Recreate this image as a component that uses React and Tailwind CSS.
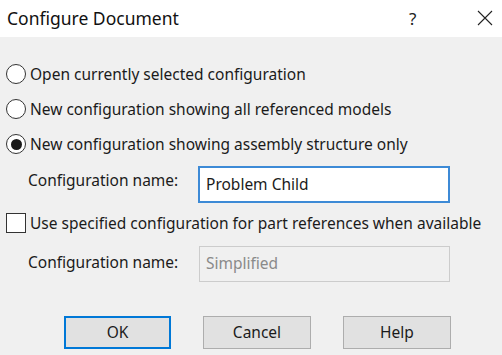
import React, { useState } from 'react';

const Radio = ({ checked, label, onSelect }) => (
  <label className="flex items-center h-[20px] cursor-default" onClick={onSelect}>
    <span className="w-[20px] h-[20px] rounded-full border-[1.5px] border-[#333333] bg-white flex items-center justify-center shrink-0">
      {checked && <span className="w-[11px] h-[11px] rounded-full bg-[#1a1a1a]" />}
    </span>
    <span className="ml-[4px] pt-[2px]">{label}</span>
  </label>
);

const Button = ({ children, primary }) => (
  <button
    className={
      primary
        ? 'w-[107px] h-[33px] bg-[#e1e1e1] border-2 border-[#0078d7] text-[15.5px]'
        : 'w-[108px] h-[33px] bg-[#e1e1e1] border border-[#adadad] text-[15.5px]'
    }
  >
    {children}
  </button>
);

export default function App() {
  const [mode, setMode] = useState(2);
  const [name, setName] = useState('Problem Child');
  const [useSpecified, setUseSpecified] = useState(false);

  const options = [
    'Open currently selected configuration',
    'New configuration showing all referenced models',
    'New configuration showing assembly structure only'
  ];

  return (
    <div className="w-[502px] h-[355px] bg-[#f0f0f0] text-[#1b1b1b] text-[15.5px] font-['Segoe_UI','Noto_Sans',sans-serif] overflow-hidden">
      {/* title bar */}
      <div className="h-[37px] bg-white flex items-center pl-[7px]">
        <span className="text-[17.5px] text-[#111]">Configure Document</span>
        <span className="ml-auto text-[17px] text-[#222] w-[10px] mr-[58px]">?</span>
        <svg width="16" height="16" viewBox="0 0 16 16" className="mr-[9px] mb-[1px]">
          <path d="M1 1 L15 15 M15 1 L1 15" stroke="#222" strokeWidth="1.1" />
        </svg>
      </div>

      <div className="pl-[6px] pt-[27px]">
        <div className="flex flex-col gap-[15px]">
          {options.map((opt, i) => (
            <Radio key={i} label={opt} checked={mode === i} onSelect={() => setMode(i)} />
          ))}
        </div>

        <div className="flex items-start mt-[12px] pl-[22px]">
          <span className="w-[170px] pt-[3px]">Configuration name:</span>
          <div className="w-[252px] h-[37px] bg-white border-2 border-[#3d8ad6] flex items-center pl-[6px]">
            <input
              value={name}
              onChange={(e) => setName(e.target.value)}
              className="w-full outline-none bg-transparent text-[15.5px] text-[#1b1b1b] caret-black"
            />
          </div>
        </div>

        <label className="flex items-center h-[20px] mt-[10px]" onClick={() => setUseSpecified(!useSpecified)}>
          <span className="w-[20px] h-[20px] border-[1.5px] border-[#333333] bg-white shrink-0" />
          <span className="ml-[4px] pt-[2px]">Use specified configuration for part references when available</span>
        </label>

        <div className="flex items-start mt-[13px] pl-[22px]">
          <span className="w-[171px] pt-[5px]">Configuration name:</span>
          <div className="w-[251px] h-[36px] bg-[#f0f0f0] border border-[#cccccc] flex items-center pl-[6px] text-[#8a8a8a]">
            Simplified
          </div>
        </div>

        <div className="flex mt-[34px] pl-[58px] gap-[32px]">
          <Button primary>OK</Button>
          <Button>Cancel</Button>
          <Button>Help</Button>
        </div>
      </div>
    </div>
  );
}
